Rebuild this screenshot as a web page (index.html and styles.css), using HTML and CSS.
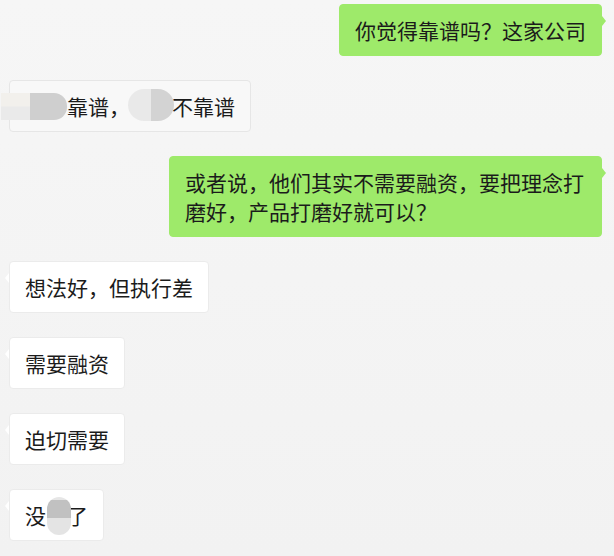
FILE: index.html
```html
<!DOCTYPE html>
<html lang="zh-CN">
	<head>
		<meta charset="UTF-8" />
		<meta name="viewport" content="width=device-width, initial-scale=1.0" />
		<title>聊天记录</title>
		<link rel="stylesheet" href="styles.css">
	</head>
	<body>
		<div class="chat">
			<div class="msg me">
				<div class="bubble">你觉得靠谱吗？这家公司</div>
			</div>
			<div class="msg other">
				<div class="bubble faded"><span class="mask"><i class="blot blot-a"></i></span>靠谱，<span class="mask"><i class="blot blot-b"></i></span>不靠谱</div>
			</div>
			<div class="msg me">
				<div class="bubble">或者说，他们其实不需要融资，要把理念打磨好，产品打磨好就可以？</div>
			</div>
			<div class="msg other">
				<div class="bubble">想法好，但执行差</div>
			</div>
			<div class="msg other">
				<div class="bubble">需要融资</div>
			</div>
			<div class="msg other">
				<div class="bubble">迫切需要</div>
			</div>
			<div class="msg other">
				<div class="bubble">没<span class="mask one"><i class="blot blot-c"></i></span>了</div>
			</div>
		</div>
	</body>
</html>
```

FILE: styles.css
```css
body {
	margin: 0;
	background: linear-gradient(#f6f6f6, #f2f2f2);
	font-family: "Noto Sans CJK SC", "Noto Sans", sans-serif;
	color: #1b1b1b;
	min-height: 556px;
}
.chat {
	display: flex;
	flex-direction: column;
	gap: 24px;
	padding: 4px 12px 0 9px;
}
.msg {
	display: flex;
}
.msg.me {
	justify-content: flex-end;
}
.bubble {
	position: relative;
	box-sizing: border-box;
	max-width: 433px;
	padding: 10.5px 15px;
	font-size: 21px;
	line-height: 29px;
	border: 1px solid #ebebeb;
	border-radius: 4px;
	background: #fff;
}
.bubble::before {
	content: "";
	position: absolute;
	top: 11px;
	border: 5px solid transparent;
}
.other .bubble::before {
	left: -5px;
	border-right: 4px solid #fff;
	border-left-width: 0;
}
.me .bubble {
	background: #9eea6a;
	border-color: #9eea6a;
}
.me .bubble::before {
	right: -5px;
	border-left: 4px solid #9eea6a;
	border-right-width: 0;
}
.bubble.faded {
	background: #f8f8f8;
	border-color: #e6e6e6;
}
.other .bubble.faded::before {
	border-right-color: transparent;
}

/* mosaic over hidden words */
.mask {
	position: relative;
	display: inline-block;
	width: 2em;
	height: 29px;
	vertical-align: top;
}
.mask.one {
	width: 1em;
}
.blot {
	position: absolute;
	filter: blur(0.6px);
}
.blot-a {
	left: -24px;
	top: 1.5px;
	width: 66px;
	height: 27px;
	border-radius: 0 13px 13px 0;
	background:
		linear-gradient(to right, #f2f0ec 0 44%, transparent 44%) top / 100% 50% no-repeat,
		linear-gradient(to right, #eaeaea 0 44%, #cfcfcf 44%);
}
.blot-b {
	left: -2px;
	top: -2.5px;
	width: 46px;
	height: 32px;
	border-radius: 16px;
	background: linear-gradient(to right, #e9e9e9 0 50%, #d3d3d3 50%);
}
.blot-c {
	left: 1px;
	top: -3.5px;
	width: 24px;
	height: 38px;
	border-radius: 12px;
	background: linear-gradient(#e6e6e6 0 8%, #c1c1c1 8% 55%, #e4e4e4 55%);
}
```
